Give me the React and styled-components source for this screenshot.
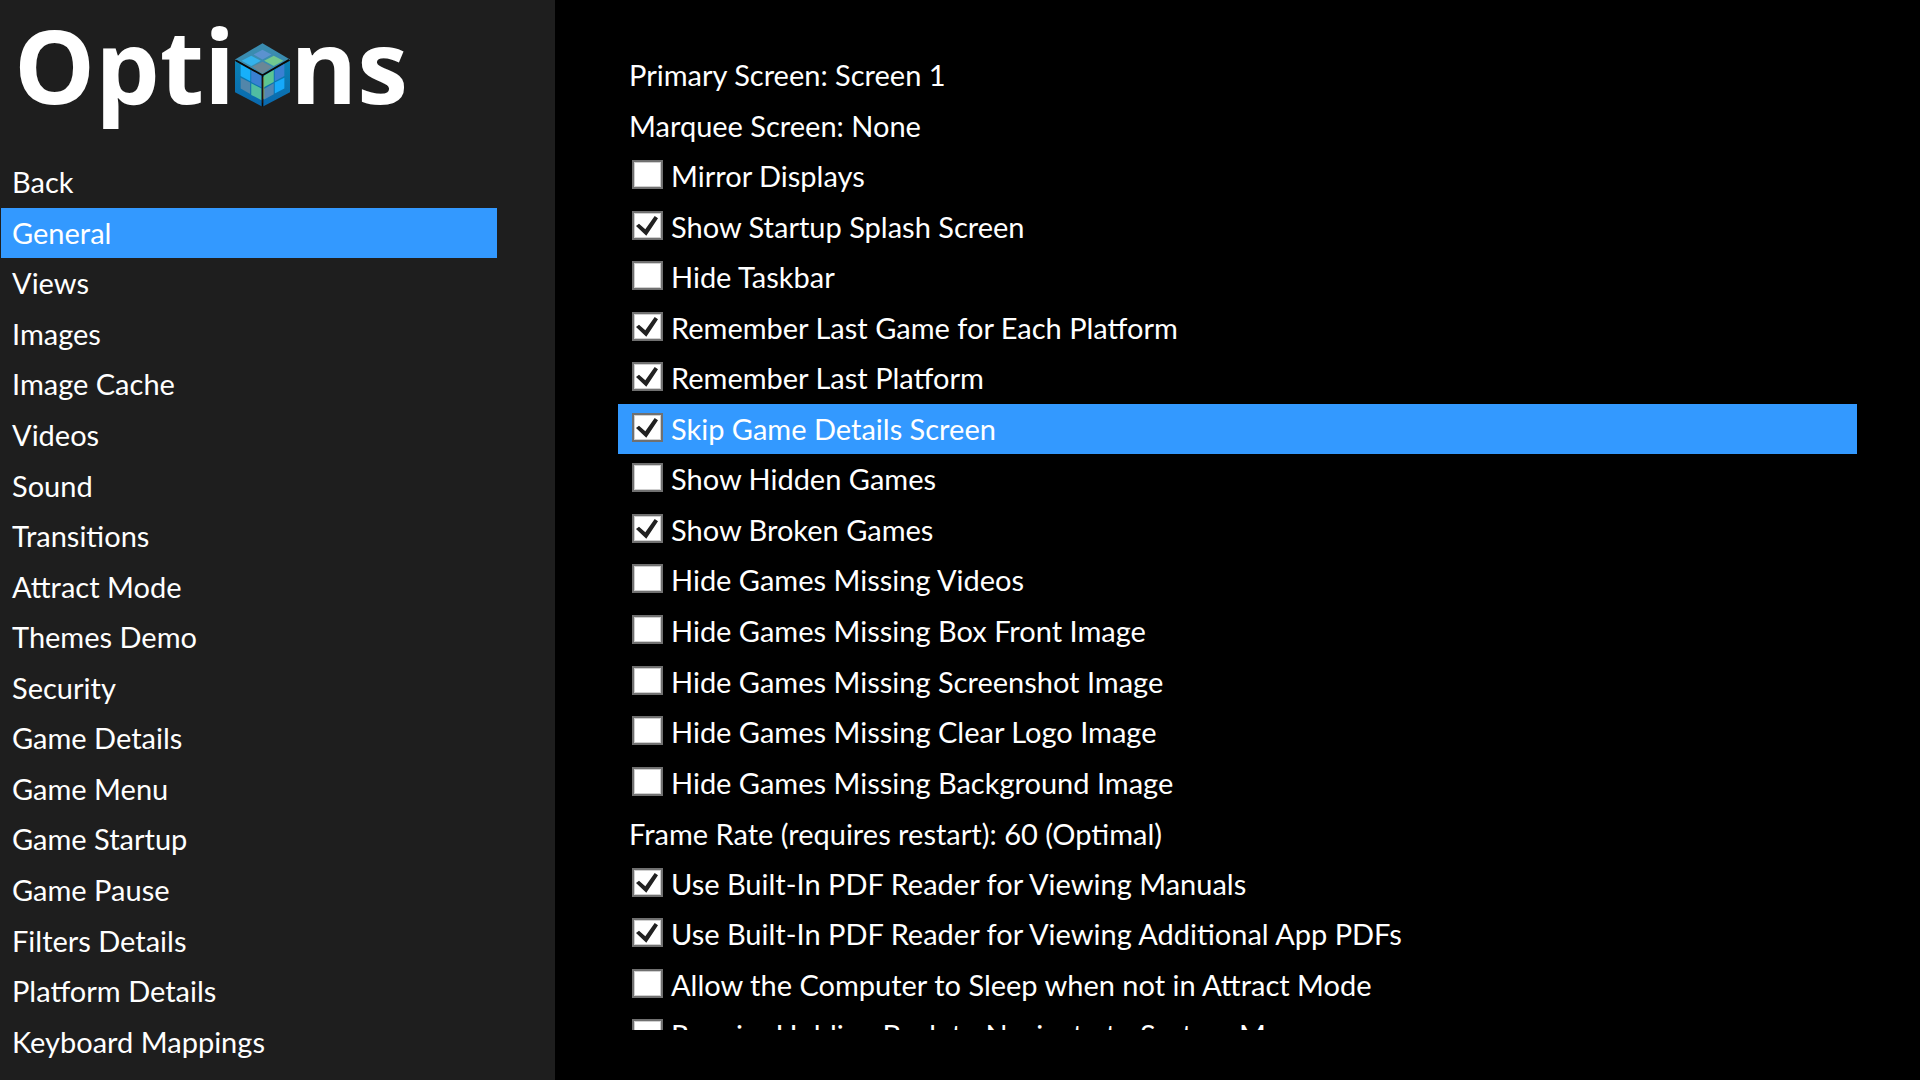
import { useState } from 'react'
import styled, { createGlobalStyle } from 'styled-components'

const menuItems = [
  'Back',
  'General',
  'Views',
  'Images',
  'Image Cache',
  'Videos',
  'Sound',
  'Transitions',
  'Attract Mode',
  'Themes Demo',
  'Security',
  'Game Details',
  'Game Menu',
  'Game Startup',
  'Game Pause',
  'Filters Details',
  'Platform Details',
  'Keyboard Mappings',
]

const initialOptions = [
  { label: 'Primary Screen: Screen 1' },
  { label: 'Marquee Screen: None' },
  { label: 'Mirror Displays', checked: false },
  { label: 'Show Startup Splash Screen', checked: true },
  { label: 'Hide Taskbar', checked: false },
  { label: 'Remember Last Game for Each Platform', checked: true },
  { label: 'Remember Last Platform', checked: true },
  { label: 'Skip Game Details Screen', checked: true },
  { label: 'Show Hidden Games', checked: false },
  { label: 'Show Broken Games', checked: true },
  { label: 'Hide Games Missing Videos', checked: false },
  { label: 'Hide Games Missing Box Front Image', checked: false },
  { label: 'Hide Games Missing Screenshot Image', checked: false },
  { label: 'Hide Games Missing Clear Logo Image', checked: false },
  { label: 'Hide Games Missing Background Image', checked: false },
  { label: 'Frame Rate (requires restart): 60 (Optimal)' },
  { label: 'Use Built-In PDF Reader for Viewing Manuals', checked: true },
  { label: 'Use Built-In PDF Reader for Viewing Additional App PDFs', checked: true },
  { label: 'Allow the Computer to Sleep when not in Attract Mode', checked: false },
  { label: 'Require Holding Back to Navigate to System Menu', checked: false },
]

function CubeLogo() {
  return (
    <Cube viewBox="0 0 166 192" aria-hidden="true">
      <defs>
        <linearGradient id="side" x1="0" y1="0" x2="0" y2="1">
          <stop offset="0" stopColor="#0b82b4" />
          <stop offset="1" stopColor="#0a68ae" />
        </linearGradient>
      </defs>
      <path d="M83 0 166 49 83 97 0 49Z" fill="#3a8cb0" />
      <path d="M0 53 83 97V192L0 148Z" fill="url(#side)" />
      <path d="M166 53 83 97V192L166 148Z" fill="url(#side)" />

      <path d="M83 20 110 34 83 49 56 34Z" fill="#5b92d0" />
      <path d="M49 38 78 53 49 69 20 53Z" fill="#33b2ec" />
      <path d="M117 38 146 53 117 69 88 53Z" fill="#72c88f" />
      <path d="M83 56 112 71 83 92 52 71Z" fill="#6b8796" />

      <path d="M17 64 46 80V115L17 99Z" fill="#17b0fa" />
      <path d="M49 82 80 98V133L49 117Z" fill="#3a80d2" />
      <path d="M17 104 46 119V153L17 137Z" fill="#5286aa" />
      <path d="M49 121 80 137V172L49 156Z" fill="#50bda2" />

      <path d="M87 98 117 81V117L87 133Z" fill="#5cc493" />
      <path d="M120 80 149 63V99L120 115Z" fill="#3a80d2" />
      <path d="M87 138 117 121V154L87 171Z" fill="#5286b2" />
      <path d="M120 119 149 104V137L120 152Z" fill="#16a9fa" />

      <path d="M3 52 83 97 163 50M83 97V192" fill="none" stroke="#0c0806" strokeWidth="5" />
      <path d="M87 102V168" stroke="#a4b431" strokeWidth="2" />
      <path d="M84 104V180" stroke="#7c2a14" strokeWidth="1" />
    </Cube>
  )
}

function CheckOption({ label, checked, onChange }) {
  return (
    <CheckLabel>
      <CheckSlot>
        <CheckInput type="checkbox" checked={checked} onChange={onChange} />
        {checked && (
          <Tick viewBox="0 0 31 29" aria-hidden="true">
            <path d="M4 15 7 12.7 13.3 18.3 22.7 5 26 7.3 14.3 24.7Z" fill="#212121" />
          </Tick>
        )}
      </CheckSlot>
      {label}
    </CheckLabel>
  )
}

export default function App() {
  const [section, setSection] = useState('General')
  const [options, setOptions] = useState(initialOptions)
  const [current, setCurrent] = useState(7)

  const toggle = (index) => {
    setCurrent(index)
    setOptions(options.map((o, i) => (i === index ? { ...o, checked: !o.checked } : o)))
  }

  return (
    <Screen>
      <GlobalStyle />
      <Sidebar>
        <Title aria-label="Options">
          Opti
          <CubeLogo />
          ns
        </Title>
        <Menu>
          {menuItems.map((item) => (
            <MenuButton key={item} $active={item === section} onClick={() => setSection(item)}>
              {item}
            </MenuButton>
          ))}
        </Menu>
      </Sidebar>

      <Content>
        <Viewport>
          <OptionList>
            {options.map((option, i) => (
              <OptionRow key={option.label} $active={i === current}>
                {option.checked === undefined ? (
                  <ValueButton onClick={() => setCurrent(i)}>{option.label}</ValueButton>
                ) : (
                  <CheckOption {...option} onChange={() => toggle(i)} />
                )}
              </OptionRow>
            ))}
          </OptionList>
        </Viewport>
      </Content>
    </Screen>
  )
}

const GlobalStyle = createGlobalStyle`
  * {
    box-sizing: border-box;
  }

  body {
    margin: 0;
    background: #000;
    color: #fff;
    font-family: Lato, 'Open Sans', sans-serif;
    font-size: 29px;
    line-height: 50px;
  }

  button {
    border: none;
    background: none;
    color: inherit;
    font: inherit;
    text-align: left;
    cursor: pointer;
  }
`

const Screen = styled.div`
  display: flex;
  height: 100vh;
  overflow: hidden;
`

const Sidebar = styled.aside`
  display: flex;
  flex-direction: column;
  flex: 0 0 555px;
  padding-bottom: 13px;
  background: #1e1e1e;
`

const Title = styled.h1`
  display: flex;
  align-items: flex-start;
  height: 157px;
  margin: 0;
  padding-left: 14px;
  font-family: 'Open Sans', sans-serif;
  font-size: 102px;
  font-weight: 700;
  line-height: 130px;
`

const Cube = styled.svg`
  width: 55px;
  height: 64px;
  margin-top: 43px;
`

const Menu = styled.nav`
  display: grid;
  grid-auto-rows: 1fr;
  flex: 1;
  min-height: 0;
  margin: 0 58px 0 1px;
`

const MenuButton = styled.button`
  padding: 0 11px;
  background: ${({ $active }) => ($active ? '#3399ff' : 'transparent')};
`

const Content = styled.main`
  flex: 1;
  min-width: 0;
  padding: 50px 63px;
`

const Viewport = styled.div`
  height: 100%;
  overflow: hidden;
`

/* taller than the viewport, so the last row is cut off */
const OptionList = styled.ul`
  display: grid;
  grid-auto-rows: 1fr;
  height: calc(100% + 31px);
  margin: 0;
  padding: 0;
  list-style: none;
`

const OptionRow = styled.li`
  display: flex;
  padding: 0 11px;
  white-space: nowrap;
  background: ${({ $active }) => ($active ? '#3399ff' : 'transparent')};
`

const ValueButton = styled.button`
  flex: 1;
  padding: 0;
`

const CheckLabel = styled.label`
  display: flex;
  flex: 1;
  gap: 8px;
  padding-left: 3px;
  cursor: pointer;
`

const CheckSlot = styled.span`
  display: grid;
  width: 31px;
  height: 29px;
  margin-top: 9px;

  > * {
    grid-area: 1 / 1;
  }
`

const CheckInput = styled.input`
  appearance: none;
  width: 31px;
  height: 29px;
  margin: 0;
  border: 2px solid #707070;
  background: #fff;
  box-shadow: inset 0 0 0 1px #cfcfcf;
`

const Tick = styled.svg`
  width: 31px;
  height: 29px;
  pointer-events: none;
`
